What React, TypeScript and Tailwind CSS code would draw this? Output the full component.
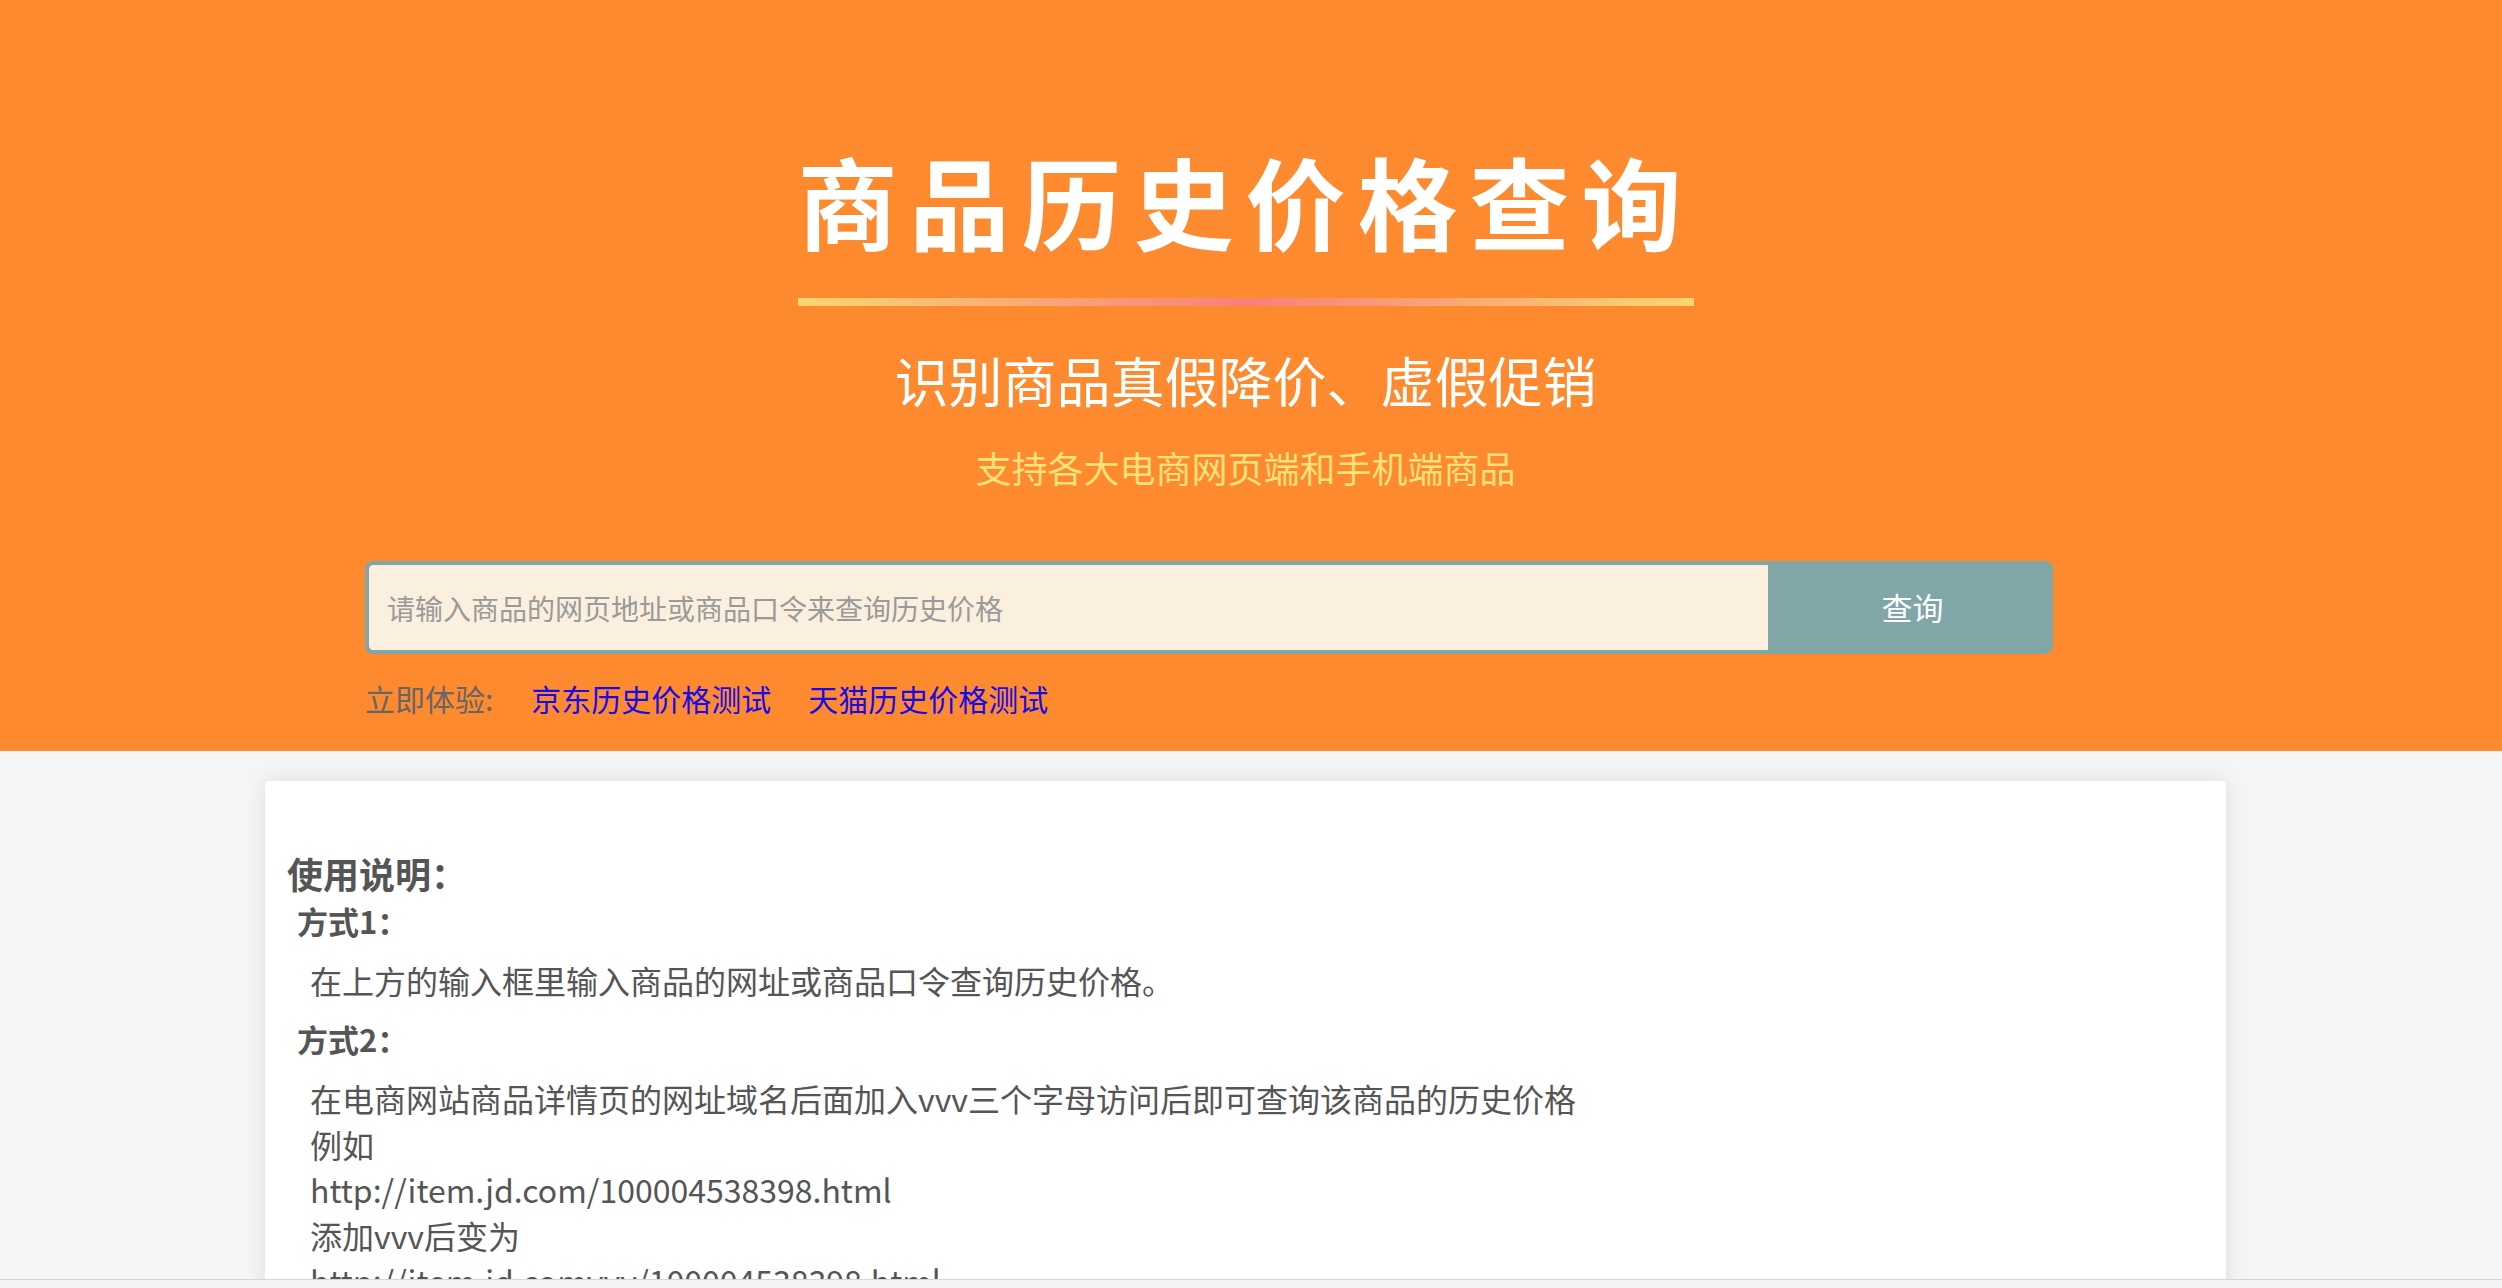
import { useState } from 'react'

const steps = [
  '在电商网站商品详情页的网址域名后面加入vvv三个字母访问后即可查询该商品的历史价格',
  '例如',
  'http://item.jd.com/100004538398.html',
  '添加vvv后变为',
  'http://item.jd.comvvv/100004538398.html',
  '即可查看该商品的历史价格走势',
]

export default function App() {
  const [query, setQuery] = useState('')

  return (
    <div className="min-h-screen bg-[#f5f5f5] font-['Noto_Sans_CJK_SC',sans-serif]">
      <header className="bg-[#fe8a2f]">
        <div className="w-[2491px] pt-[150px] pb-[38px] flex flex-col items-center">
          <div className="flex flex-col items-stretch">
            <h1 className="text-[100px] leading-none font-bold tracking-[12px] text-white">商品历史价格查询</h1>
            <div className="mt-[48px] h-[8px] bg-[linear-gradient(to_right,#fdd66f,#f8807a,#fdd66f)]" />
          </div>
          <p className="mt-[47px] text-[54px] leading-none text-white">识别商品真假降价、虚假促销</p>
          <p className="mt-[42px] text-[36px] leading-none text-[#ffe27a]">支持各大电商网页端和手机端商品</p>

          <div className="mt-[76px] w-[1761px]">
            <form
              className="flex w-[1688px] h-[93px] rounded-[8px] border-[4px] border-[#80a6a8] bg-[#80a6a8] overflow-hidden"
              onSubmit={(e) => e.preventDefault()}
            >
              <input
                value={query}
                onChange={(e) => setQuery(e.target.value)}
                placeholder="请输入商品的网页地址或商品口令来查询历史价格"
                className="flex-1 min-w-0 bg-[#faf0dd] rounded-l-[4px] pl-[18px] text-[28px] text-[#333] placeholder:text-[#9a9a9a] outline-none"
              />
              <button type="submit" className="w-[281px] pl-[8px] text-white text-[31px]">
                查询
              </button>
            </form>
            <div className="mt-[29px] flex items-center text-[30px] leading-none">
              <span className="text-[#666]">立即体验:</span>
              <a href="#" className="ml-[38px] text-[#1a0ae6]">京东历史价格测试</a>
              <a href="#" className="ml-[37px] text-[#1a0ae6]">天猫历史价格测试</a>
            </div>
          </div>
        </div>
      </header>

      <main className="w-[2491px] pt-[30px] pb-[40px]">
        <div className="mx-auto w-[1961px] rounded-[4px] bg-white pt-[67px] pl-[22px] pb-[60px] text-[#555] shadow-[0_0_20px_rgba(0,0,0,0.1)]">
          <h2 className="text-[36px] leading-[50px] font-bold">使用说明：</h2>
          <h3 className="ml-[10px] text-[31px] leading-[46px] font-bold">方式1：</h3>
          <p className="ml-[23px] my-[13px] text-[32px] leading-[46px]">在上方的输入框里输入商品的网址或商品口令查询历史价格。</p>
          <h3 className="ml-[10px] text-[31px] leading-[46px] font-bold">方式2：</h3>
          <div className="ml-[23px] my-[14px] text-[32px] leading-[45.5px]">
            {steps.map((line) => (
              <div key={line}>{line}</div>
            ))}
          </div>
        </div>
      </main>

      <div className="fixed bottom-0 left-0 right-0 h-[9px] border-t border-[#d6d6d6] bg-[#f3f3f3]" />
    </div>
  )
}
